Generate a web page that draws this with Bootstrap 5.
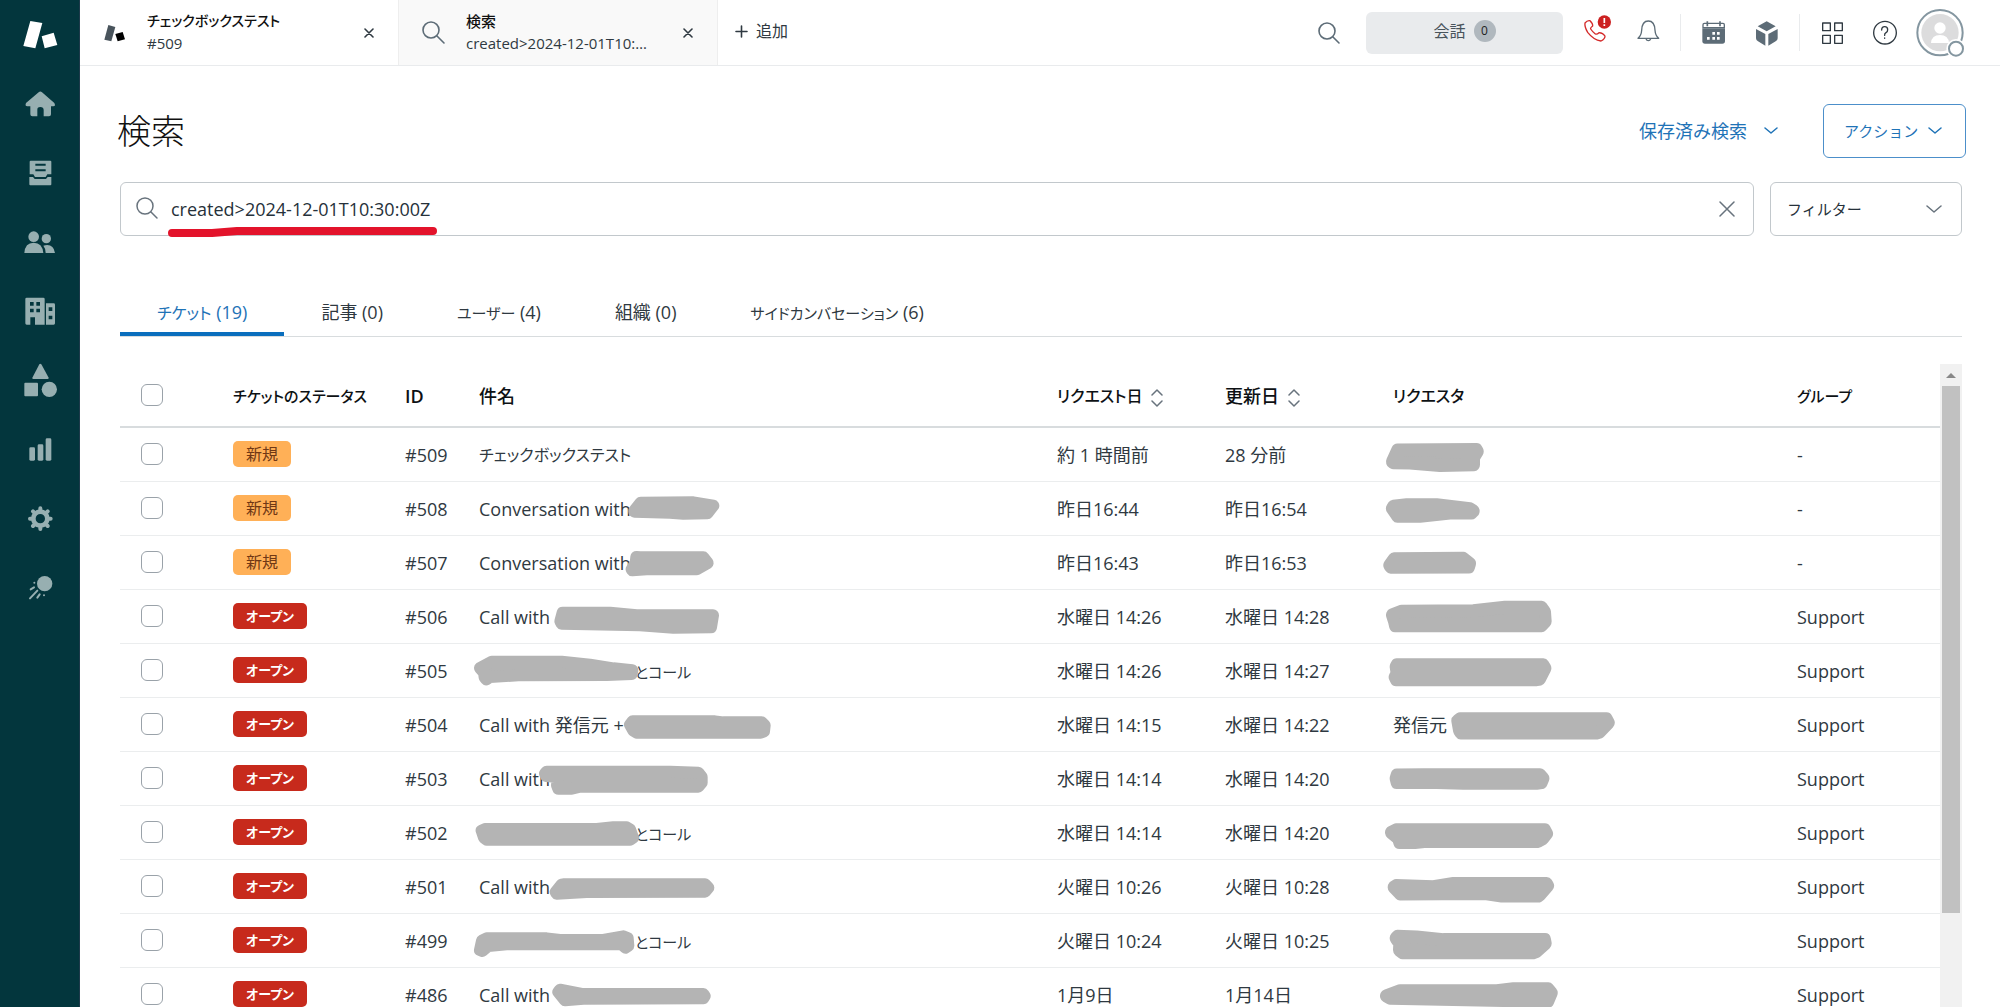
<!DOCTYPE html>
<html lang="ja">
<head>
<meta charset="utf-8">
<meta name="viewport" content="width=device-width, initial-scale=1">
<title>検索</title>
<link href="https://cdn.jsdelivr.net/npm/bootstrap@5.3.0/dist/css/bootstrap.min.css" rel="stylesheet">
<style>
:root{--ink:#2f3941;--blue:#1f73b7;--line:#e9ebed;--icon:#5d6c77}
body{font-family:"Open Sans","Noto Sans CJK JP",sans-serif;font-size:18px;line-height:24px;color:var(--ink);font-feature-settings:"palt";background:#fff}
a{text-decoration:none}
.kana{font-size:16px}
.kana-sm{font-size:15px}
.rail{width:80px;background:#03363d;border-right:1px solid #1d3a4a;fill:#97afb1;stroke:none}
.rail a{height:69px}
.glyph{width:40px;height:40px;flex:none}
.topbar{height:66px;border-bottom:1px solid var(--line)}
.wtab{width:319px;padding:0 14px 2px 15px;border-right:1px solid #eee;font-size:15px;line-height:22px;color:var(--ink)}
.wtab.current{background:#f9f9f9}
.wtab strong{font-weight:500;color:#111;display:block}
.wtab .kana{font-size:14px}
.wtab .cut{width:188px}
.plain{background:none;border:0;padding:0;color:inherit}
.wtab .plain{width:30px;height:30px}
.addtab{font-size:16px;padding:0 0 3px 17px}
.tools{padding-right:36px}
.talk{width:197px;height:42px;margin:0 5px 0 11px;background:#e9ebed;border:0;border-radius:6px;font-size:16px;color:#49545c}
.count{width:22px;height:22px;line-height:22px;border-radius:11px;background:#b0b8be;color:#222;font-size:12px}
.tool{width:53px;display:flex;justify-content:center}
.rule{width:1px;height:37px;background:var(--line);margin:0 6px}
.heading{padding:38px 34px 0 37px}
h1{font-size:34px;font-weight:300;line-height:48px;color:#111}
.saved{color:var(--blue);margin-right:44px}
.act{width:143px;height:54px;padding:0 22px 0 20px;border:1px solid #4c8fca;border-radius:6px;color:var(--blue);background:#fff}
.body-pad{padding:0 38px 0 40px}
.finder{height:54px;border:1px solid #c2c8cc;border-radius:6px;padding:0 14px 0 12px}
.finder input{border:0;outline:0;padding:0;color:#26313a;background:none;min-width:0}
.marker{left:46px;top:42px;width:272px;height:14px}
.filter-box{width:192px}
.filter-box select{height:54px;border:1px solid #c2c8cc;border-radius:6px;padding:0 16px;appearance:none;background:#fff;color:#26313a}
.filter-box svg{right:20px;top:23px;pointer-events:none}
.sections{margin-top:53px;border-bottom:1px solid #d8dcde}
.sections a{height:47px;padding:11px 37px 0;color:var(--ink)}
.sections a.active{color:var(--blue);box-shadow:inset 0 -4px 0 #0a6ebd}
.results{margin-top:27px;min-height:0}
.grid{table-layout:fixed;width:100%;border-collapse:collapse}
.grid th{height:63px;padding:2px 0 0;font-weight:500;color:#0d1114;border-bottom:2px solid #d8dcde}
.grid td{height:54px;padding:2px 0 0;position:relative;border-bottom:1px solid #ebedee;white-space:nowrap}
.grid .form-check-input{width:22px;height:22px;margin:0 0 2px 21px;border:1px solid #9aa2a9;border-radius:6px;display:block}
.c-check{width:113px}.c-status{width:172px}.c-id{width:74px}.c-date{width:168px}.c-req{width:404px}.c-group{width:143px}
.state{display:inline-block;height:26px;line-height:26px;margin-bottom:2px;border-radius:5px;padding:0 13px;font-size:16px;vertical-align:middle}
.state-new{background:#ffb057;color:#703815}
.state-open{background:#c72a1c;color:#fff;font-weight:700;font-size:13px}
.cover{position:absolute;top:0;height:54px;fill:#b4b4b4;stroke:#b4b4b4;stroke-width:36;stroke-linejoin:round}
.cover-s{left:-39px;width:350px}
.cover-r{left:-23px;width:300px}
.hidden-name{display:inline-block;width:156px}
.track{width:22px;background:#f1f1f1;padding:0 2px}
.thumb{height:527px;background:#c1c1c1}
.ln{fill:none;stroke:currentColor;stroke-linecap:round;stroke-linejoin:round}
.soft{color:#68737d}
.slate{color:#5d6c77}
</style>
<script src="https://cdn.jsdelivr.net/npm/bootstrap@5.3.0/dist/js/bootstrap.bundle.min.js"></script>
</head>
<body class="vh-100 overflow-hidden d-flex">
<nav class="rail flex-shrink-0 d-flex flex-column" aria-label="メイン">
  <a href="#" class="d-flex align-items-center justify-content-center" aria-label="ロゴ"><svg class="glyph" viewBox="60 43 120 120" fill="#fff"><path d="M91 61l36 6-21 76-36-7zM125 107l36-11 11 37-38 10z"/></svg></a>
  <a href="#" class="d-flex align-items-center justify-content-center" aria-label="ホーム"><svg class="glyph" viewBox="60 251 120 120"><path d="M116 276q5-5 10 0l37 32q5 10-3 10h-7v24q0 6-6 6h-16v-19q0-9-10-9t-9 9v19H97q-6 0-6-6v-24h-9q-8 0-4-10z"/></svg></a>
  <a href="#" class="d-flex align-items-center justify-content-center" aria-label="ビュー"><svg class="glyph" viewBox="60 457 120 120"><path fill-rule="evenodd" d="M92 480h59q3 0 3 3v38h-12l-5 8h-32l-5-8H89v-38q0-3 3-3zm14 9v6h31v-6zm0 17v6h31v-6z"/><path d="M88 529h11l5 6h34l5-6h11v22q0 3-3 3H91q-3 0-3-3z"/></svg></a>
  <a href="#" class="d-flex align-items-center justify-content-center" aria-label="顧客"><svg class="glyph" viewBox="60 665 120 120"><circle cx="101" cy="709" r="16"/><path d="M73 758q2-31 28-31t29 31zM130 736q30-8 35 22h-28q0-14-7-22z"/><circle cx="139" cy="715" r="14"/></svg></a>
  <a href="#" class="d-flex align-items-center justify-content-center" aria-label="組織"><svg class="glyph" viewBox="60 872 120 120"><path fill-rule="evenodd" d="M80 892h50q4 0 4 4v77h-29v-22H91v22H80q-4 0-4-4v-73q0-4 4-4zm10 13v11h11v-11zm19 0v11h11v-11zm-19 20v11h11v-11zm19 0v11h11v-11zM138 909h23q4 0 4 4v56q0 4-4 4h-23zm8 12v11h11v-11zm0 25v11h11v-11z"/></svg></a>
  <a href="#" class="d-flex align-items-center justify-content-center" aria-label="オブジェクト"><svg class="glyph" viewBox="60 90 120 120"><path d="M118 103q3-4 6 0l22 40q0 4-3 4h-43q-4 0-3-4z"/><rect x="73" y="158" width="41" height="41" rx="3"/><circle cx="148" cy="178" r="23"/></svg></a>
  <a href="#" class="d-flex align-items-center justify-content-center" aria-label="レポート"><svg class="glyph" viewBox="60 296 120 120"><rect x="88" y="351" width="17" height="40" rx="4"/><rect x="113" y="342" width="17" height="49" rx="4"/><rect x="137" y="324" width="17" height="67" rx="4"/></svg></a>
  <a href="#" class="d-flex align-items-center justify-content-center" aria-label="設定"><svg class="glyph" viewBox="60 504 120 120"><circle cx="121" cy="566" r="21" fill="none" stroke="#97afb1" stroke-width="14"/><g stroke="#97afb1" stroke-width="12" stroke-linecap="round"><path d="M121 535v5M121 592v5M90 566h5M147 566h5M99 544l4 4M139 584l4 4M143 544l-4 4M103 584l-4 4"/></g></svg></a>
  <a href="#" class="d-flex align-items-center justify-content-center" aria-label="スター"><svg class="glyph" viewBox="60 711 120 120"><circle cx="134" cy="761" r="23"/><g stroke="#97afb1" stroke-width="6" stroke-linecap="round"><path d="M92 778l10-6M90 805l22-23M112 803l7-10M103 758v0M132 796v0"/></g></svg></a>
</nav>

<div class="flex-fill d-flex flex-column" style="min-width:0">
  <header class="topbar flex-shrink-0 d-flex align-items-stretch">
    <div class="wtab d-flex align-items-center">
      <svg class="glyph" viewBox="285 35 120 120"><path fill="#49545c" d="M325 74l21 6-12 43-21-5z"/><path fill="#000" d="M346 101l22-6 7 22-22 6z"/></svg>
      <div class="ms-2 ps-1 flex-fill"><strong class="kana">チェックボックステスト</strong>#509</div>
      <button class="plain" aria-label="閉じる"><svg width="10" height="10" viewBox="0 0 10 10" class="ln" stroke-width="1.6"><path d="M1 1l8 8M9 1L1 9"/></svg></button>
    </div>
    <div class="wtab current d-flex align-items-center">
      <svg class="glyph ln slate" viewBox="0 0 40 40" stroke-width="1.6"><circle cx="17" cy="18" r="8"/><path d="M23 24l7 7"/></svg>
      <div class="ms-2 ps-1 flex-fill"><strong>検索</strong><span class="cut d-block text-truncate">created&gt;2024-12-01T10:30:00Z</span></div>
      <button class="plain" aria-label="閉じる"><svg width="10" height="10" viewBox="0 0 10 10" class="ln" stroke-width="1.6"><path d="M1 1l8 8M9 1L1 9"/></svg></button>
    </div>
    <button class="plain addtab d-flex align-items-center gap-2"><svg width="13" height="13" viewBox="0 0 13 13" class="ln" stroke-width="1.6"><path d="M6.500 1v11M1 6.500h11"/></svg>追加</button>
    <div class="tools ms-auto d-flex align-items-center">
      <button class="plain tool" aria-label="検索"><svg class="glyph ln slate" viewBox="0 0 40 40" stroke-width="1.6"><circle cx="18" cy="18" r="8"/><path d="M24 24l6 6"/></svg></button>
      <button class="talk d-flex align-items-center justify-content-center gap-2 pb-1">会話 <span class="count">0</span></button>
      <button class="plain tool" aria-label="通話"><svg class="glyph" viewBox="43 38 120 120"><path fill="none" stroke="#d42a2a" stroke-width="4" stroke-linejoin="round" d="M73 68q7-9 15-7 9 9 8 16-8 6-6 9 6 9 14 15 5 2 11-4 12 1 18 10 0 9-12 15-22-3-40-26-10-17-8-28z"/><circle cx="131" cy="65" r="20" fill="#cc2020"/><path stroke="#fff" stroke-width="5" d="M131 53v15M131 72v5"/></svg></button>
      <button class="plain tool" aria-label="通知"><svg class="glyph ln slate" viewBox="202 38 120 120" stroke-width="4"><path d="M232 114q10-8 11-24 1-28 20-28t20 28q1 16 11 24zM256 115q2 6 7 6t7-6"/></svg></button>
      <span class="rule"></span>
      <button class="plain tool" aria-label="カレンダー"><svg class="glyph" viewBox="400 38 120 120" fill="#5d6c77"><path d="M431 69h56q4 0 4 4v9h-64v-9q0-4 4-4z" fill="#fff" stroke="#5d6c77" stroke-width="4"/><path d="M425 84h68v38q0 8-8 8h-52q-8 0-8-8z"/><path d="M440 63v15M478 63v15" stroke="#5d6c77" stroke-width="5"/><path fill="#fff" d="M455 95h8v8h-8zM469 95h8v8h-8zM439 110h8v8h-8zM455 110h8v8h-8zM469 110h8v8h-8z"/></svg></button>
      <button class="plain tool" aria-label="アプリ"><svg class="glyph" viewBox="559 38 120 120" fill="#5d6c77"><path d="M618 63l27 15-27 15-27-15zM586 86l28 15v35l-22-13q-6-3-6-9zM651 86l-28 15v35l22-13q6-3 6-9z"/></svg></button>
      <span class="rule"></span>
      <button class="plain tool" aria-label="製品"><svg class="glyph ln" viewBox="756 38 120 120" stroke-width="4"><path d="M785 68h23v23h-23zM821 68h23v23h-23zM785 105h23v24h-23zM821 105h23v24h-23z"/></svg></button>
      <button class="plain tool" aria-label="ヘルプ"><svg class="glyph ln" viewBox="913 38 120 120" stroke-width="4"><circle cx="970" cy="97" r="34"/><path d="M960 89q0-10 9-10t9 9q0 6-5 9t-4 8M969 113v1"/></svg></button>
      <button class="plain d-flex ms-1" aria-label="プロフィール"><svg width="48" height="48" viewBox="1069 27 144 144"><circle cx="1141" cy="98" r="68" fill="#fff" stroke="#8496a0" stroke-width="6"/><circle cx="1141" cy="98" r="56" fill="#dcdcdd"/><circle cx="1141" cy="84" r="17" fill="#fff"/><path fill="#fff" d="M1114 129q2-24 27-24t27 24z"/><circle cx="1189" cy="146" r="29" fill="#fff"/><circle cx="1189" cy="146" r="21" fill="#fff" stroke="#8496a0" stroke-width="6"/></svg></button>
    </div>
  </header>

  <main class="flex-fill d-flex flex-column" style="min-height:0">
    <div class="heading d-flex align-items-center">
      <h1 class="m-0 me-auto">検索</h1>
      <button class="plain saved d-flex align-items-center">保存済み検索<svg class="ln ms-3" width="16" height="9" viewBox="0 0 16 9" stroke-width="1.5"><path d="M2 1l6 5 6-5"/></svg></button>
      <button class="act kana-sm d-flex align-items-center justify-content-between">アクション<svg class="ln" width="16" height="9" viewBox="0 0 16 9" stroke-width="1.5"><path d="M2 1l6 5 6-5"/></svg></button>
    </div>
    <div class="body-pad flex-fill d-flex flex-column" style="min-height:0">
      <div class="d-flex gap-3 mt-4">
        <div class="finder position-relative flex-fill d-flex align-items-center">
          <svg class="ln soft flex-shrink-0" width="30" height="30" viewBox="0 0 30 30" stroke-width="1.5"><circle cx="12" cy="12" r="8"/><path d="M18 18l6 6"/></svg>
          <input class="flex-fill ms-1 ps-1" type="text" aria-label="検索語" value="created&gt;2024-12-01T10:30:00Z">
          <button class="plain px-1 d-flex" aria-label="クリア"><svg class="ln soft" width="16" height="16" viewBox="0 0 16 16" stroke-width="1.5"><path d="M1 1l14 14M15 1L1 15"/></svg></button>
          <svg class="marker position-absolute" viewBox="0 0 272 14" fill="none" stroke="#e3132b" stroke-width="8" stroke-linecap="round" stroke-linejoin="round"><path d="M5 8L45 8 70 6H266"/></svg>
        </div>
        <div class="filter-box position-relative">
          <select class="w-100 kana-sm" aria-label="フィルター"><option>フィルター</option></select>
          <svg class="ln soft position-absolute" width="16" height="9" viewBox="0 0 16 9" stroke-width="1.5"><path d="M1 1l7 6 7-6"/></svg>
        </div>
      </div>

      <nav class="sections d-flex" aria-label="検索結果の種類">
        <a href="#" class="active"><span class="kana">チケット</span> (19)</a>
        <a href="#">記事 (0)</a>
        <a href="#"><span class="kana-sm">ユーザー</span> (4)</a>
        <a href="#">組織 (0)</a>
        <a href="#"><span class="kana-sm">サイドカンバセーション</span> (6)</a>
      </nav>

      <div class="results flex-fill d-flex overflow-hidden">
        <div class="flex-fill overflow-hidden">
          <table class="grid">
            <colgroup><col class="c-check"><col class="c-status"><col class="c-id"><col><col class="c-date"><col class="c-date"><col class="c-req"><col class="c-group"></colgroup>
            <thead><tr>
              <th><input class="form-check-input" type="checkbox" aria-label="すべて選択"></th>
              <th class="kana-sm">チケットのステータス</th><th class="fw-semibold">ID</th><th>件名</th>
              <th class="kana">リクエスト日 <svg class="ln soft ms-1" width="12" height="18" viewBox="0 0 12 18" stroke-width="1.5"><path d="M1 6l5-5 5 5M1 12l5 5 5-5"/></svg></th>
              <th>更新日 <svg class="ln soft ms-1" width="12" height="18" viewBox="0 0 12 18" stroke-width="1.5"><path d="M1 6l5-5 5 5M1 12l5 5 5-5"/></svg></th>
              <th class="kana">リクエスタ</th><th class="kana-sm">グループ</th>
            </tr></thead>
            <tbody>
            <tr><td><input class="form-check-input" type="checkbox" aria-label="#509"></td><td><span class="state state-new">新規</span></td><td>#509</td><td class="kana">チェックボックステスト</td><td>約 1 時間前</td><td>28 分前</td>
              <td><svg class="cover cover-r" viewBox="0 0 900 147" preserveAspectRatio="none"><path d="M66 92L82 60 320 59 323 64 312 80 312 100 210 102 120 95 70 94z"/></svg></td><td>-</td></tr>
            <tr><td><input class="form-check-input" type="checkbox" aria-label="#508"></td><td><span class="state state-new">新規</span></td><td>#508</td><td>Conversation with<svg class="cover cover-s" viewBox="0 0 1050 162"><path d="M583 86L602 62 760 61 820 71 802 94 730 95 690 92 583 89z"/></svg></td><td>昨日16:44</td><td>昨日16:54</td>
              <td><svg class="cover cover-r" viewBox="0 0 900 147" preserveAspectRatio="none"><path d="M66 72L70 66 110 62 200 62 300 73 311 79 305 84 240 84 150 93 82 93 76 85z"/></svg></td><td>-</td></tr>
            <tr><td><input class="form-check-input" type="checkbox" aria-label="#507"></td><td><span class="state state-new">新規</span></td><td>#507</td><td>Conversation with<svg class="cover cover-s" viewBox="0 0 1050 162"><path d="M589 63L600 64 790 64 803 81 770 100 620 100 577 103 575 100 587 80z"/></svg></td><td>昨日16:43</td><td>昨日16:53</td>
              <td><svg class="cover cover-r" viewBox="0 0 900 147" preserveAspectRatio="none"><path d="M58 80L72 62 280 61 300 75 297 84 62 85z"/></svg></td><td>-</td></tr>
            <tr><td><input class="form-check-input" type="checkbox" aria-label="#506"></td><td><span class="state state-open">オープン</span></td><td>#506</td><td>Call with<svg class="cover cover-s" viewBox="0 0 1050 162"><path d="M361 94L368 68 510 68 590 76 819 76 813 112 700 113 600 106 365 101z"/></svg></td><td>水曜日 14:26</td><td>水曜日 14:28</td>
              <td><svg class="cover cover-r" viewBox="0 0 900 147" preserveAspectRatio="none"><path d="M66 68L95 58 310 57 405 47 515 47 525 60 527 85 515 97 75 97 72 85z"/></svg></td><td>Support</td></tr>
            <tr><td><input class="form-check-input" type="checkbox" aria-label="#505"></td><td><span class="state state-open">オープン</span></td><td>#505</td><td><span class="hidden-name"></span><span class="kana-sm">とコール</span><svg class="cover cover-s" viewBox="0 0 1050 162"><path d="M120 72L155 53 365 53 450 62 520 73 577 79 575 90 500 93 235 94 150 99 139 106 134 100 132 86z"/></svg></td><td>水曜日 14:26</td><td>水曜日 14:27</td>
              <td><svg class="cover cover-r" viewBox="0 0 900 147" preserveAspectRatio="none"><path d="M77 62L80 57 520 57 526 66 510 95 500 97 78 97 74 90 80 80z"/></svg></td><td>Support</td></tr>
            <tr><td><input class="form-check-input" type="checkbox" aria-label="#504"></td><td><span class="state state-open">オープン</span></td><td>#504</td><td>Call with 発信元 +<svg class="cover cover-s" viewBox="0 0 1050 162"><path d="M570 80L578 70 825 70 850 73 965 73 974 82 972 100 962 104 590 104 580 98z"/></svg></td><td>水曜日 14:15</td><td>水曜日 14:22</td>
              <td>発信元<svg class="cover cover-r" viewBox="0 0 900 147" preserveAspectRatio="none"><path d="M262 62L270 57 710 57 716 67 690 92 680 95 272 95 267 88z"/></svg></td><td>Support</td></tr>
            <tr><td><input class="form-check-input" type="checkbox" aria-label="#503"></td><td><span class="state state-open">オープン</span></td><td>#503</td><td>Call with<svg class="cover cover-s" viewBox="0 0 1050 162"><path d="M315 65L320 59 690 59 775 62 785 75 785 92 775 104 420 104 395 110 355 110 351 100 354 75 318 72z"/></svg></td><td>水曜日 14:14</td><td>水曜日 14:20</td>
              <td><svg class="cover cover-r" viewBox="0 0 900 147" preserveAspectRatio="none"><path d="M77 72L80 63 160 62 510 62 520 72 515 83 500 85 280 85 200 83 80 83z"/></svg></td><td>Support</td></tr>
            <tr><td><input class="form-check-input" type="checkbox" aria-label="#502"></td><td><span class="state state-open">オープン</span></td><td>#502</td><td><span class="hidden-name"></span><span class="kana-sm">とコール</span><svg class="cover cover-s" viewBox="0 0 1050 162"><path d="M125 74L135 69 470 69 520 64 560 64 570 70 579 95 570 101 140 101 132 95z"/></svg></td><td>水曜日 14:14</td><td>水曜日 14:20</td>
              <td><svg class="cover cover-r" viewBox="0 0 900 147" preserveAspectRatio="none"><path d="M63 72L78 65 525 65 531 75 520 88 505 96 170 96 135 99 88 99 84 88z"/></svg></td><td>Support</td></tr>
            <tr><td><input class="form-check-input" type="checkbox" aria-label="#501"></td><td><span class="state state-open">オープン</span></td><td>#501</td><td>Call with<svg class="cover cover-s" viewBox="0 0 1050 162"><path d="M347 96L365 74 370 73 795 73 805 83 795 95 440 96 350 101z"/></svg></td><td>火曜日 10:26</td><td>火曜日 10:28</td>
              <td><svg class="cover cover-r" viewBox="0 0 900 147" preserveAspectRatio="none"><path d="M71 74L78 70 190 73 250 64 530 64 534 70 510 95 505 98 395 98 345 91 90 92 84 86z"/></svg></td><td>Support</td></tr>
            <tr><td><input class="form-check-input" type="checkbox" aria-label="#499"></td><td><span class="state state-open">オープン</span></td><td>#499</td><td><span class="hidden-name"></span><span class="kana-sm">とコール</span><svg class="cover cover-s" viewBox="0 0 1050 162"><path d="M126 80L140 73 320 73 360 78 490 78 550 67 563 72 565 95 556 101 545 91 200 91 145 96 127 111 120 108z"/></svg></td><td>火曜日 10:24</td><td>火曜日 10:25</td>
              <td><svg class="cover cover-r" viewBox="0 0 900 147" preserveAspectRatio="none"><path d="M77 66L82 61 140 63 220 70 525 70 527 80 500 102 490 105 97 105 87 98 88 80z"/></svg></td><td>Support</td></tr>
            <tr><td><input class="form-check-input" type="checkbox" aria-label="#486"></td><td><span class="state state-open">オープン</span></td><td>#486</td><td>Call with<svg class="cover cover-s" viewBox="0 0 1050 162"><path d="M355 72L360 65 425 78 790 78 794 84 790 91 430 92 375 97z"/></svg></td><td>1月9日</td><td>1月14日</td>
              <td><svg class="cover cover-r" viewBox="0 0 900 147" preserveAspectRatio="none"><path d="M48 76L90 62 380 62 430 57 535 57 545 68 535 90 400 88 60 82z"/></svg></td><td>Support</td></tr>
            </tbody>
          </table>
        </div>
        <div class="track flex-shrink-0" aria-hidden="true">
          <svg class="d-block mx-auto" width="18" height="22" viewBox="0 0 18 22" fill="#888"><path d="M4 14l5-5 5 5z"/></svg>
          <div class="thumb"></div>
        </div>
      </div>
    </div>
  </main>
</div>
</body>
</html>
